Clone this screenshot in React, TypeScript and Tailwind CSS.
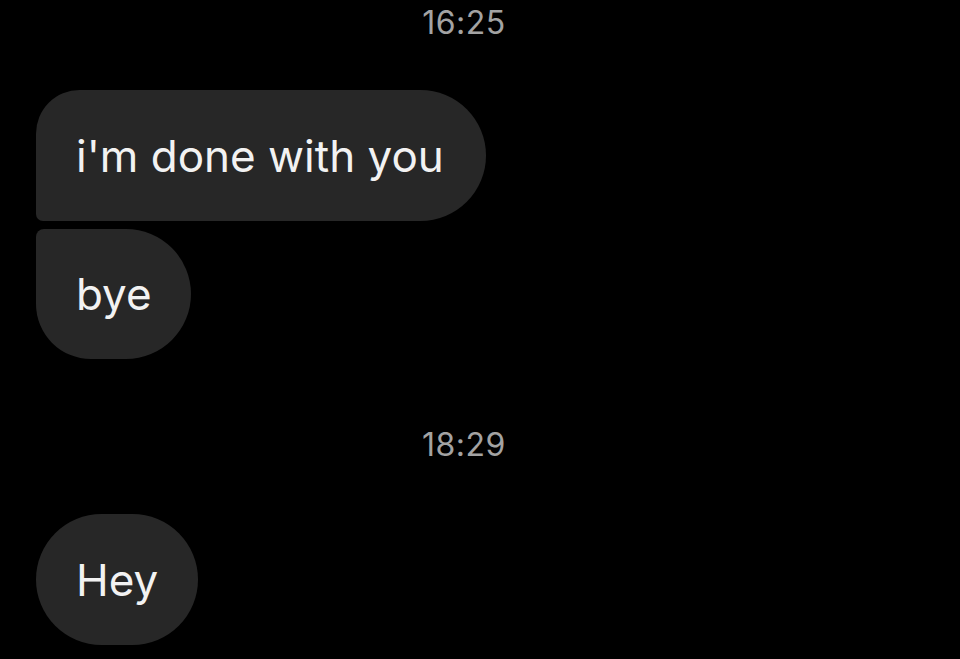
import React from "react";

export default function App() {
  return (
    <div
      className="w-[960px] h-[659px] bg-black overflow-hidden flex flex-col"
      style={{ fontFamily: "Inter, 'Liberation Sans', sans-serif" }}
    >
      <div className="pt-[7px] pr-[32px] flex justify-center text-[32px] leading-[31px] text-[#a3a3a3] tracking-[0.5px]">
        16:25
      </div>

      <div className="mt-[52px] pl-[36px] flex flex-col gap-[8px] items-start">
        <div className="h-[131px] flex items-center pl-[40px] pr-[42px] bg-[#272727] rounded-tl-[44px] rounded-tr-[66px] rounded-br-[66px] rounded-bl-[7px] text-[44px] leading-[44px] text-[#f2f2f2]">
          i'm done with you
        </div>
        <div className="h-[130px] flex items-center pl-[40px] pr-[39px] bg-[#272727] rounded-tl-[8px] rounded-tr-[65px] rounded-br-[65px] rounded-bl-[55px] text-[44px] leading-[44px] text-[#f2f2f2]">
          bye
        </div>
      </div>

      <div className="mt-[70px] pr-[32px] flex justify-center text-[32px] leading-[31px] text-[#a3a3a3] tracking-[0.5px]">
        18:29
      </div>

      <div className="mt-[54px] pl-[36px] flex">
        <div className="h-[131px] flex items-center pl-[40px] pr-[40px] bg-[#272727] rounded-full text-[44px] leading-[44px] text-[#f2f2f2]">
          Hey
        </div>
      </div>
    </div>
  );
}
